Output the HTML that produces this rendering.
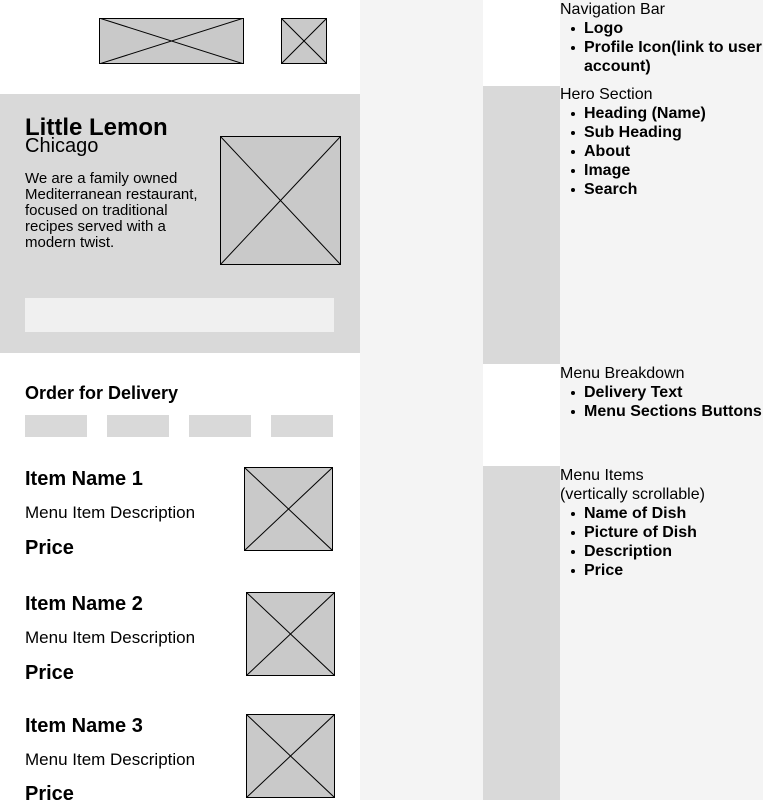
<!DOCTYPE html>
<html style="overflow:hidden;height:800px"><head><meta charset="utf-8"><style>
*{margin:0;padding:0;box-sizing:border-box}
html,body{overflow:hidden}
body{width:763px;height:800px;background:#f4f4f4;position:relative;font-family:"Liberation Sans",sans-serif;color:#000}
.a{position:absolute;white-space:nowrap}
svg.ph{position:absolute}
.r{font-size:16px;line-height:19px;left:560px}
.r .h{font-weight:500}
.r .b{font-weight:700;padding-left:24px;position:relative}
.r .b:before{content:"";position:absolute;left:11px;top:8px;width:4px;height:4px;border-radius:50%;background:#000}
.r .b.nb:before{display:none}
.n{font-size:20px;line-height:24px;font-weight:700;left:25px}
.d{font-size:17px;line-height:20px;left:25px}
.p{font-size:20px;line-height:24px;font-weight:700;left:25px}
.btn{position:absolute;top:415px;width:62px;height:22px;background:#d9d9d9}
</style></head><body>
<div class="a" style="left:0;top:0;width:360px;height:800px;background:#fff"></div>
<svg class="ph" style="left:99px;top:18px" width="145" height="46"><rect x="0.5" y="0.5" width="144" height="45" fill="#c9c9c9" stroke="#000"/><line x1="0" y1="0" x2="145" y2="46" stroke="#000"/><line x1="0" y1="46" x2="145" y2="0" stroke="#000"/></svg>
<svg class="ph" style="left:281px;top:18px" width="46" height="46"><rect x="0.5" y="0.5" width="45" height="45" fill="#c9c9c9" stroke="#000"/><line x1="0" y1="0" x2="46" y2="46" stroke="#000"/><line x1="0" y1="46" x2="46" y2="0" stroke="#000"/></svg>
<div class="a" style="left:0;top:94px;width:360px;height:259px;background:#d9d9d9"></div>
<div class="a" style="left:25px;top:114px;font-size:24px;line-height:28px;font-weight:700">Little Lemon</div>
<div class="a" style="left:25px;top:134px;font-size:20px;line-height:24px">Chicago</div>
<div class="a" style="left:25px;top:171px;font-size:15px;line-height:16px">We are a family owned<br>Mediterranean restaurant,<br>focused on traditional<br>recipes served with a<br>modern twist.</div>
<svg class="ph" style="left:220px;top:136px" width="121" height="129"><rect x="0.5" y="0.5" width="120" height="128" fill="#c9c9c9" stroke="#000"/><line x1="0" y1="0" x2="121" y2="129" stroke="#000"/><line x1="0" y1="129" x2="121" y2="0" stroke="#000"/></svg>
<div class="a" style="left:25px;top:298px;width:309px;height:34px;background:#f0f0f0"></div>
<div class="a" style="left:25px;top:382px;font-size:18px;line-height:22px;font-weight:700">Order for Delivery</div>
<div class="btn" style="left:25px"></div><div class="btn" style="left:107px"></div><div class="btn" style="left:189px"></div><div class="btn" style="left:271px"></div>
<div class="a n" style="top:467px">Item Name 1</div><div class="a d" style="top:503px">Menu Item Description</div><div class="a p" style="top:536px">Price</div>
<svg class="ph" style="left:244px;top:467px" width="89" height="84"><rect x="0.5" y="0.5" width="88" height="83" fill="#c9c9c9" stroke="#000"/><line x1="0" y1="0" x2="89" y2="84" stroke="#000"/><line x1="0" y1="84" x2="89" y2="0" stroke="#000"/></svg>
<div class="a n" style="top:592px">Item Name 2</div><div class="a d" style="top:628px">Menu Item Description</div><div class="a p" style="top:661px">Price</div>
<svg class="ph" style="left:246px;top:592px" width="89" height="84"><rect x="0.5" y="0.5" width="88" height="83" fill="#c9c9c9" stroke="#000"/><line x1="0" y1="0" x2="89" y2="84" stroke="#000"/><line x1="0" y1="84" x2="89" y2="0" stroke="#000"/></svg>
<div class="a n" style="top:714px">Item Name 3</div><div class="a d" style="top:750px">Menu Item Description</div><div class="a p" style="top:782px">Price</div>
<svg class="ph" style="left:246px;top:714px" width="89" height="84"><rect x="0.5" y="0.5" width="88" height="83" fill="#c9c9c9" stroke="#000"/><line x1="0" y1="0" x2="89" y2="84" stroke="#000"/><line x1="0" y1="84" x2="89" y2="0" stroke="#000"/></svg>
<div class="a" style="left:483px;top:0;width:77px;height:86px;background:#fff"></div>
<div class="a" style="left:483px;top:86px;width:77px;height:278px;background:#d9d9d9"></div>
<div class="a" style="left:483px;top:364px;width:77px;height:102px;background:#fff"></div>
<div class="a" style="left:483px;top:466px;width:77px;height:334px;background:#d9d9d9"></div>
<div class="a r" style="top:0"><div class="h">Navigation Bar</div><div class="b">Logo</div><div class="b">Profile Icon(link to user</div><div class="b nb">account)</div></div>
<div class="a r" style="top:85px"><div class="h">Hero Section</div><div class="b">Heading (Name)</div><div class="b">Sub Heading</div><div class="b">About</div><div class="b">Image</div><div class="b">Search</div></div>
<div class="a r" style="top:364px"><div class="h">Menu Breakdown</div><div class="b">Delivery Text</div><div class="b">Menu Sections Buttons</div></div>
<div class="a r" style="top:466px"><div class="h">Menu Items</div><div class="h">(vertically scrollable)</div><div class="b">Name of Dish</div><div class="b">Picture of Dish</div><div class="b">Description</div><div class="b">Price</div></div>
</body></html>
